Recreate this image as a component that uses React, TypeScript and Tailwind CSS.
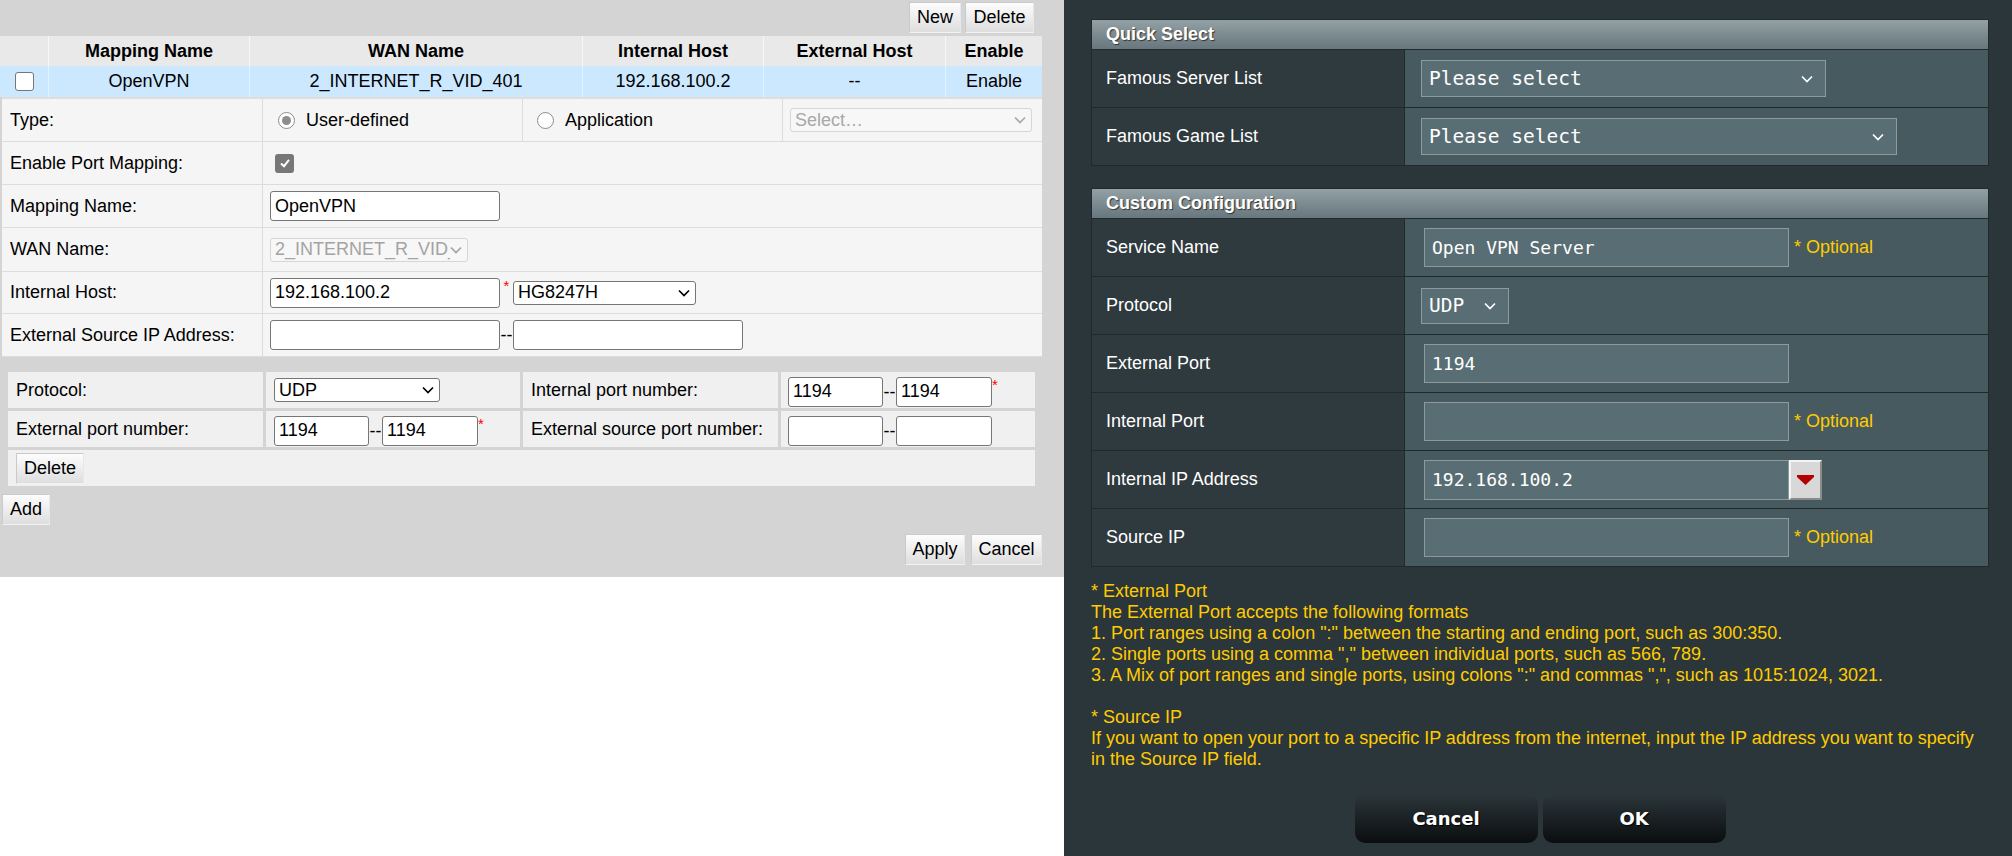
import React from 'react'

const SANS = "font-['Liberation_Sans',Arial,sans-serif]"
const MONO = "font-['DejaVu_Sans_Mono',monospace]"

function Chevron({ className = '' }: { className?: string }) {
  return (
    <svg width="12" height="8" viewBox="0 0 12 8" className={className}>
      <path d="M1 1.5 L6 6.5 L11 1.5" fill="none" stroke="currentColor" strokeWidth="1.7" />
    </svg>
  )
}

function GrayBtn({ label, className = '' }: { label: string; className?: string }) {
  return (
    <div
      className={`flex items-center justify-center h-[31px] text-[18px] text-black bg-linear-to-b from-[#fdfdfd] to-[#dedede] border border-[#cacaca] border-b-[#f2f2f2] border-r-[#e8e8e8] ${className}`}
    >
      {label}
    </div>
  )
}

function LInput({ value = '', className = '' }: { value?: string; className?: string }) {
  return (
    <div className={`flex items-center bg-white border border-[#767676] rounded-[3px] px-[4px] text-[18px] text-black ${className}`}>
      {value}
    </div>
  )
}

function LSelect({ value, className = '', disabled = false }: { value: string; className?: string; disabled?: boolean }) {
  return (
    <div
      className={`flex items-center justify-between border rounded-[3px] pl-[4px] pr-[5px] text-[18px] ${
        disabled ? 'border-[#d6d6d6] text-[#a3a3a3] bg-[#f7f7f7]' : 'border-[#767676] bg-white text-black'
      } ${className}`}
    >
      <span className="overflow-hidden whitespace-nowrap">{value}</span>
      <Chevron className="shrink-0" />
    </div>
  )
}

function Star() {
  return <span className="self-start text-[15px] leading-none text-[#ff0000] mt-[2px]">*</span>
}

function Dash() {
  return <span className="w-[13px] text-[18px] text-black text-center leading-none">--</span>
}

function Radio({ checked }: { checked?: boolean }) {
  return (
    <div className="w-[17px] h-[17px] rounded-full border border-[#8d8d8d] bg-white flex items-center justify-center shrink-0">
      {checked && <div className="w-[9px] h-[9px] rounded-full bg-[#8d8d8d]" />}
    </div>
  )
}

function FRow({ label, children, h = 'h-[43px]' }: { label: string; children?: React.ReactNode; h?: string }) {
  return (
    <div className={`flex border-b border-[#dcdcdc] ${h}`}>
      <div className="w-[261px] flex items-center pl-[8px] border-r border-[#dcdcdc]">{label}</div>
      <div className="flex-1 flex items-center pl-[7px]">{children}</div>
    </div>
  )
}

function PortPair({ star = false }: { star?: boolean }) {
  return (
    <div className="flex items-center h-full">
      <LInput className="w-[95px] h-[30px]" value={star ? '1194' : ''} />
      <Dash />
      <LInput className="w-[96px] h-[30px]" value={star ? '1194' : ''} />
      {star && <Star />}
    </div>
  )
}

function LeftPanel() {
  const head = [
    { w: 'w-[49px]', t: '' },
    { w: 'w-[201px]', t: 'Mapping Name' },
    { w: 'w-[333px]', t: 'WAN Name' },
    { w: 'w-[181px]', t: 'Internal Host' },
    { w: 'w-[182px]', t: 'External Host' },
    { w: 'w-[96px]', t: 'Enable' },
  ]
  const row = ['OpenVPN', '2_INTERNET_R_VID_401', '192.168.100.2', '--', 'Enable']
  return (
    <div className={`w-[1064px] flex flex-col ${SANS} text-[18px] text-black`}>
      <div className="h-[577px] bg-[#d4d4d4] flex flex-col">
        {/* toolbar */}
        <div className="w-[1042px] h-[36px] flex justify-end items-start pt-[2px] pr-[8px] gap-[4px]">
          <GrayBtn label="New" className="w-[52px] h-[31px]" />
          <GrayBtn label="Delete" className="w-[69px] h-[31px]" />
        </div>

        {/* list table */}
        <div className="w-[1042px] flex h-[30px] bg-[#e9e9e9] font-bold">
          {head.map((c, i) => (
            <div key={i} className={`${c.w} flex items-center justify-center border-r border-[#f7f7f7] last:border-r-0`}>
              {c.t}
            </div>
          ))}
        </div>
        <div className="w-[1042px] flex h-[31px] bg-[#cce8ff]">
          <div className="w-[49px] flex items-center justify-center border-r border-[#e3f2ff]">
            <div className="w-[19px] h-[19px] bg-white border border-[#767676] rounded-[3px]" />
          </div>
          {row.map((t, i) => (
            <div key={i} className={`${head[i + 1].w} flex items-center justify-center border-r border-[#e3f2ff] last:border-r-0`}>
              {t}
            </div>
          ))}
        </div>

        {/* edit form */}
        <div className="ml-[2px] w-[1040px] bg-[#f5f5f5] border-t-[2px] border-[#dedede]">
          <div className="flex border-b border-[#dcdcdc] h-[43px]">
            <div className="w-[261px] flex items-center pl-[8px] border-r border-[#dcdcdc]">Type:</div>
            <div className="w-[260px] flex items-center pl-[15px] gap-[11px] border-r border-[#dcdcdc]">
              <Radio checked />
              <span>User-defined</span>
            </div>
            <div className="w-[260px] flex items-center pl-[14px] gap-[11px] border-r border-[#dcdcdc]">
              <Radio />
              <span>Application</span>
            </div>
            <div className="flex-1 flex items-center pl-[7px]">
              <LSelect value="Select…" disabled className="w-[242px] h-[24px] text-[#a8a8a8]" />
            </div>
          </div>
          <FRow label="Enable Port Mapping:">
            <div className="ml-[5px] w-[19px] h-[19px] rounded-[3px] bg-[#777777] flex items-center justify-center">
              <svg width="12" height="12" viewBox="0 0 12 12">
                <path d="M2 6.5 L5 9.2 L10 2.8" fill="none" stroke="white" strokeWidth="2" />
              </svg>
            </div>
          </FRow>
          <FRow label="Mapping Name:">
            <LInput value="OpenVPN" className="w-[230px] h-[30px]" />
          </FRow>
          <FRow label="WAN Name:" h="h-[44px]">
            <LSelect value="2_INTERNET_R_VID_401" disabled className="w-[198px] h-[24px]" />
          </FRow>
          <FRow label="Internal Host:" h="h-[42px]">
            <LInput value="192.168.100.2" className="w-[230px] h-[30px]" />
            <div className="w-[13px] flex justify-center self-stretch pt-[6px]">
              <span className="text-[15px] leading-none text-[#ff0000]">*</span>
            </div>
            <LSelect value="HG8247H" className="w-[183px] h-[24px]" />
          </FRow>
          <FRow label="External Source IP Address:">
            <LInput className="w-[230px] h-[30px]" />
            <Dash />
            <LInput className="w-[230px] h-[30px]" />
          </FRow>
        </div>

        {/* port table */}
        <div className="mt-[15px] ml-[8px] w-[1027px] grid grid-cols-[255px_254px_255px_254px] gap-x-[3px] gap-y-[3px]">
          <div className="h-[36px] bg-[#f0f0f0] flex items-center pl-[8px]">Protocol:</div>
          <div className="h-[36px] bg-[#f0f0f0] flex items-center pl-[8px]">
            <LSelect value="UDP" className="w-[166px] h-[24px]" />
          </div>
          <div className="h-[36px] bg-[#f0f0f0] flex items-center pl-[8px]">Internal port number:</div>
          <div className="h-[36px] bg-[#f0f0f0] flex items-center pl-[7px] pt-[3px]">
            <PortPair star />
          </div>
          <div className="h-[36px] bg-[#f0f0f0] flex items-center pl-[8px]">External port number:</div>
          <div className="h-[36px] bg-[#f0f0f0] flex items-center pl-[8px] pt-[3px]">
            <PortPair star />
          </div>
          <div className="h-[36px] bg-[#f0f0f0] flex items-center pl-[8px]">External source port number:</div>
          <div className="h-[36px] bg-[#f0f0f0] flex items-center pl-[7px] pt-[3px]">
            <PortPair />
          </div>
          <div className="col-span-4 h-[36px] bg-[#f0f0f0] flex items-center pl-[8px]">
            <GrayBtn label="Delete" className="w-[68px] h-[31px]" />
          </div>
        </div>

        <div className="mt-[8px] ml-[2px]">
          <GrayBtn label="Add" className="w-[48px]" />
        </div>
        <div className="mt-[9px] w-[1042px] flex justify-end gap-[6px]">
          <GrayBtn label="Apply" className="w-[60px]" />
          <GrayBtn label="Cancel" className="w-[71px]" />
        </div>
      </div>
      <div className="flex-1 bg-white" />
    </div>
  )
}

function DSelect({ value, className = '' }: { value: string; className?: string }) {
  return (
    <div className={`flex items-center justify-between bg-[#596d74] border border-[#8e9a9e] pl-[7px] pr-[12px] text-white ${MONO} text-[19.5px] ${className}`}>
      <span className="whitespace-nowrap">{value}</span>
      <Chevron />
    </div>
  )
}

function DInput({ value = '', className = '' }: { value?: string; className?: string }) {
  return (
    <div className={`flex items-center bg-[#596d74] border border-[#8e9a9e] pl-[7px] text-white ${MONO} text-[18px] w-[365px] h-[39px] ${className}`}>
      {value}
    </div>
  )
}

function Optional() {
  return <span className="ml-[5px] text-[#ffcc00] text-[18px]">* Optional</span>
}

function DRow({ label, children }: { label: string; children?: React.ReactNode }) {
  return (
    <div className="flex h-[58px] border-t border-[#20292c]">
      <div className="w-[313px] shrink-0 bg-[#2f3a3e] border-r border-[#20292c] flex items-center pl-[14px] text-white text-[18px]">
        {label}
      </div>
      <div className="flex-1 bg-[#475a5f] flex items-center pl-[16px]">{children}</div>
    </div>
  )
}

function DHead({ title }: { title: string }) {
  return (
    <div className="h-[29px] bg-linear-to-b from-[#93a1a6] to-[#68777d] flex items-center pl-[14px] text-white font-bold text-[18px] [text-shadow:1px_1px_1px_#333]">
      {title}
    </div>
  )
}

function RightPanel() {
  return (
    <div className={`flex-1 bg-[#2b363a] pt-[19px] pl-[27px] pr-[23px] ${SANS}`}>
      <div className="border border-[#20292c]">
        <DHead title="Quick Select" />
        <DRow label="Famous Server List">
          <DSelect value="Please select" className="w-[405px] h-[37px]" />
        </DRow>
        <DRow label="Famous Game List">
          <DSelect value="Please select" className="w-[476px] h-[37px]" />
        </DRow>
      </div>

      <div className="mt-[22px] border border-[#20292c]">
        <DHead title="Custom Configuration" />
        <DRow label="Service Name">
          <DInput value="Open VPN Server" className="ml-[3px]" />
          <Optional />
        </DRow>
        <DRow label="Protocol">
          <DSelect value="UDP" className="w-[88px] h-[36px] pl-[5px] pr-[9px]" />
        </DRow>
        <DRow label="External Port">
          <DInput value="1194" className="ml-[3px]" />
        </DRow>
        <DRow label="Internal Port">
          <DInput className="ml-[3px]" />
          <Optional />
        </DRow>
        <DRow label="Internal IP Address">
          <DInput value="192.168.100.2" className="ml-[3px] h-[40px]" />
          <div className="w-[33px] h-[40px] bg-[#d8d8d8] border-t-2 border-l-2 border-t-[#f4f4f4] border-l-[#f4f4f4] border-b-2 border-r-2 border-b-[#8a8a8a] border-r-[#8a8a8a] flex items-center justify-center">
            <svg width="17" height="10" viewBox="0 0 17 10">
              <polygon points="0,0 17,0 17,2 8.5,10 0,2" fill="#b30000" />
            </svg>
          </div>
        </DRow>
        <DRow label="Source IP">
          <DInput className="ml-[3px]" />
          <Optional />
        </DRow>
      </div>

      <div className="mt-[14px] text-[#ffcc00] text-[18px] leading-[21px] whitespace-nowrap">
        <div>* External Port</div>
        <div>The External Port accepts the following formats</div>
        <div>1. Port ranges using a colon ":" between the starting and ending port, such as 300:350.</div>
        <div>2. Single ports using a comma "," between individual ports, such as 566, 789.</div>
        <div>3. A Mix of port ranges and single ports, using colons ":" and commas ",", such as 1015:1024, 3021.</div>
        <div className="h-[21px]" />
        <div>* Source IP</div>
        <div>If you want to open your port to a specific IP address from the internet, input the IP address you want to specify</div>
        <div>in the Source IP field.</div>
      </div>

      <div className="mt-[24px] flex justify-center gap-[5px]">
        {['Cancel', 'OK'].map(b => (
          <div
            key={b}
            className="w-[183px] h-[49px] rounded-[10px] bg-linear-to-b from-[#2c363a] to-[#0b0e10] flex items-center justify-center text-white font-bold text-[18px] font-['DejaVu_Sans',Verdana,sans-serif] [text-shadow:1px_1px_1px_#000]"
          >
            {b}
          </div>
        ))}
      </div>
    </div>
  )
}

export default function App() {
  return (
    <div className="w-[2012px] h-[856px] flex overflow-hidden">
      <LeftPanel />
      <RightPanel />
    </div>
  )
}
